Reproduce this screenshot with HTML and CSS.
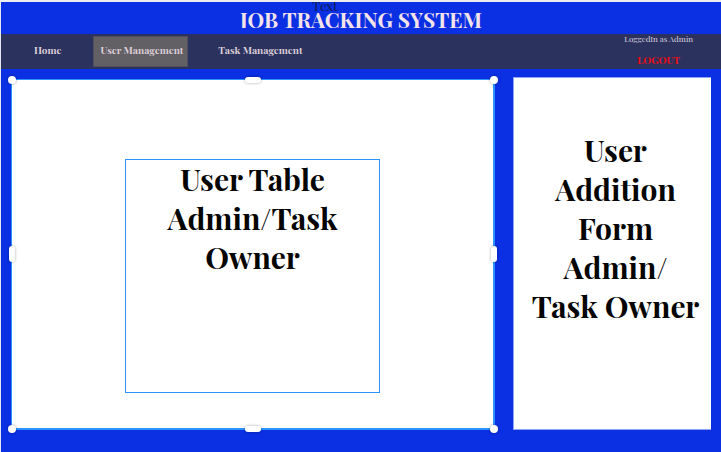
FILE: index.html
```html
<!DOCTYPE html>
<html lang="en">
<head>
<meta charset="utf-8">
<meta name="viewport" content="width=device-width, initial-scale=1">
<title>Job Tracking System</title>
<link rel="stylesheet" href="styles.css">
</head>
<body>
<header class="header">
  <span class="marker"></span>
  <span class="placeholder">Text</span>
  <h1 class="title">JOB TRACKING SYSTEM</h1>
</header>
<div class="bar">
  <nav class="nav">
    <a class="link" href="#home">Home</a>
    <a class="link active" href="#users" aria-current="page">User Management</a>
    <a class="link" href="#tasks">Task Management</a>
  </nav>
  <div class="account">
    <span class="who">LoggedIn as Admin</span>
    <button class="logout" type="button">LOGOUT</button>
  </div>
</div>
<main class="main">
  <section class="panel selected">
    <div class="box">
      <h2 class="heading">User Table<br>Admin/Task<br>Owner</h2>
    </div>
    <span class="handle corner top left"></span>
    <span class="handle corner top right"></span>
    <span class="handle corner bottom left"></span>
    <span class="handle corner bottom right"></span>
    <span class="handle wide top"></span>
    <span class="handle wide bottom"></span>
    <span class="handle tall left"></span>
    <span class="handle tall right"></span>
  </section>
  <section class="panel form">
    <h2 class="heading">User<br>Addition<br>Form<br>Admin/<br>Task Owner</h2>
  </section>
</main>
</body>
</html>
```
FILE: styles.css
```css
* {
  box-sizing: border-box;
}

body {
  display: flex;
  flex-direction: column;
  min-height: 100vh;
  margin: 0;
  border-top: 2px solid #ededf0;
  border-left: 1px solid #e4e8f4;
  background: #0b2fe3;
  font-family: "Playfair Display", "Liberation Serif", serif;
  font-weight: 700;
}

.header {
  position: relative;
  display: flex;
  justify-content: center;
  align-items: flex-start;
  height: 32px;
}

.marker {
  position: absolute;
  top: 0;
  left: -1px;
  width: 1px;
  height: 13px;
  background: #ffc400;
}

.placeholder {
  position: absolute;
  top: -4px;
  left: 45%;
  z-index: 1;
  transform: translateX(-50%);
  color: #0b1850;
  font-size: 13px;
  font-weight: 400;
  line-height: 16px;
}

.title {
  margin: 3px 0 0;
  height: 23px;
  overflow: hidden;
  color: #f3e3ea;
  font-size: 21px;
  line-height: 28px;
}

.bar {
  display: flex;
  justify-content: space-between;
  height: 35px;
  padding: 0 28px 0 24px;
  background: #2b325e;
}

.nav {
  display: flex;
  align-items: center;
  gap: 22px;
}

.link {
  height: 31px;
  padding: 0 4px 0 7px;
  border: 1px solid transparent;
  color: #ddcfd8;
  font-size: 10px;
  line-height: 26px;
  text-decoration: none;
}

.link:first-child {
  padding: 0 8px;
}

.active {
  border-color: #514f5c;
  background: #636065;
}

.account {
  display: flex;
  flex-direction: column;
  align-items: center;
  gap: 10px;
}

.who {
  color: #ddd4e0;
  font-size: 8px;
  font-weight: 400;
  line-height: 10px;
}

.logout {
  padding: 0;
  border: 0;
  background: none;
  color: #f00a12;
  font: inherit;
  font-size: 10px;
  line-height: 12px;
}

.main {
  display: grid;
  flex: 1;
  grid-template-columns: 484fr 198fr;
  gap: 18px;
  padding: 8px 10px 22px;
}

.panel {
  background: #fff;
}

.selected {
  position: relative;
  display: flex;
  align-items: center;
  justify-content: center;
  margin-top: 2px;
  border: 1px solid #2b92ff;
  border-right-width: 2px;
  border-bottom-width: 2px;
}

.box {
  width: 53%;
  height: 67%;
  margin-top: 44px;
  border: 1px solid #2b92f5;
}

.form {
  padding-top: 53px;
  padding-left: 6px;
  border: 1px solid #8fa4f5;
  border-right: 0;
}

.heading {
  margin: 0;
  color: #050505;
  font-size: 30px;
  line-height: 39px;
  text-align: center;
}

.handle {
  position: absolute;
  background: #fff;
  box-shadow: 0 0 3px rgba(0, 0, 0, 0.35);
  translate: -50% -50%;
}

.corner {
  width: 8px;
  height: 8px;
  border-radius: 50%;
}

.wide {
  left: 50%;
  width: 16px;
  height: 6px;
  border-radius: 3px;
}

.tall {
  top: 50%;
  width: 6px;
  height: 16px;
  border-radius: 3px;
}

.top {
  top: 0;
}

.bottom {
  top: calc(100% + 1px);
}

.left {
  left: 0;
}

.right {
  left: calc(100% + 1px);
}
```
